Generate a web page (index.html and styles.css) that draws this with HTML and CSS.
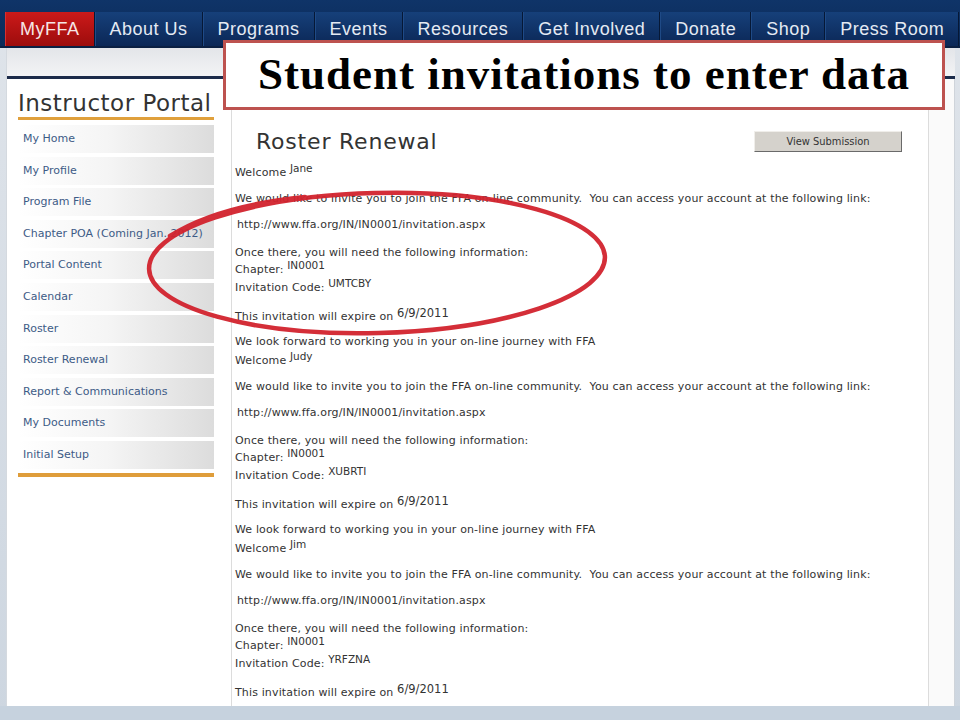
FILE: index.html
```html
<!DOCTYPE html>
<html lang="en">
<head>
    <meta charset="UTF-8">
    <title>Roster Renewal - Instructor Portal</title>
    <link rel="stylesheet" href="styles.css">
</head>
<body>
    <div class="topnav">
        <ul class="tabs">
            <li class="tab active">MyFFA</li>
            <li class="tab">About Us</li>
            <li class="tab">Programs</li>
            <li class="tab">Events</li>
            <li class="tab">Resources</li>
            <li class="tab">Get Involved</li>
            <li class="tab">Donate</li>
            <li class="tab">Shop</li>
            <li class="tab">Press Room</li>
        </ul>
    </div>

    <div class="page">
        <div class="page-top"></div>
        <div class="page-main">
            <aside class="sidebar">
                <h2 class="portal-title">Instructor Portal</h2>
                <ul class="side-menu">
                    <li><a href="#">My Home</a></li>
                    <li><a href="#">My Profile</a></li>
                    <li><a href="#">Program File</a></li>
                    <li><a href="#">Chapter POA (Coming Jan. 2012)</a></li>
                    <li><a href="#">Portal Content</a></li>
                    <li><a href="#">Calendar</a></li>
                    <li><a href="#">Roster</a></li>
                    <li><a href="#">Roster Renewal</a></li>
                    <li><a href="#">Report &amp; Communications</a></li>
                    <li><a href="#">My Documents</a></li>
                    <li><a href="#">Initial Setup</a></li>
                </ul>
                <div class="side-foot"></div>
            </aside>

            <section class="content">
                <div class="content-head">
                    <h1>Roster Renewal</h1>
                    <button class="view-button">View Submission</button>
                </div>

                <div class="invite">
                    <div class="line welcome">Welcome <span class="val">Jane</span></div>
                    <div class="line invite-text">We would like to invite you to join the FFA on-line community.&nbsp; You can access your account at the following link:</div>
                    <div class="line link">http://www.ffa.org/IN/IN0001/invitation.aspx</div>
                    <div class="line once">Once there, you will need the following information:</div>
                    <div class="line chapter">Chapter: <span class="val">IN0001</span></div>
                    <div class="line code">Invitation Code: <span class="val">UMTCBY</span></div>
                    <div class="line expire">This invitation will expire on <span class="val date">6/9/2011</span></div>
                    <div class="line forward">We look forward to working you in your on-line journey with FFA</div>
                </div>

                <div class="invite">
                    <div class="line welcome">Welcome <span class="val">Judy</span></div>
                    <div class="line invite-text">We would like to invite you to join the FFA on-line community.&nbsp; You can access your account at the following link:</div>
                    <div class="line link">http://www.ffa.org/IN/IN0001/invitation.aspx</div>
                    <div class="line once">Once there, you will need the following information:</div>
                    <div class="line chapter">Chapter: <span class="val">IN0001</span></div>
                    <div class="line code">Invitation Code: <span class="val">XUBRTI</span></div>
                    <div class="line expire">This invitation will expire on <span class="val date">6/9/2011</span></div>
                    <div class="line forward">We look forward to working you in your on-line journey with FFA</div>
                </div>

                <div class="invite">
                    <div class="line welcome">Welcome <span class="val">Jim</span></div>
                    <div class="line invite-text">We would like to invite you to join the FFA on-line community.&nbsp; You can access your account at the following link:</div>
                    <div class="line link">http://www.ffa.org/IN/IN0001/invitation.aspx</div>
                    <div class="line once">Once there, you will need the following information:</div>
                    <div class="line chapter">Chapter: <span class="val">IN0001</span></div>
                    <div class="line code">Invitation Code: <span class="val">YRFZNA</span></div>
                    <div class="line expire">This invitation will expire on <span class="val date">6/9/2011</span></div>
                </div>
            </section>

            <div class="page-edge"></div>
        </div>
    </div>

    <div class="statusbar"></div>

    <div class="slide-title">Student invitations to enter data</div>

    <svg class="annotation" width="960" height="720" viewBox="0 0 960 720">
        <ellipse cx="377" cy="263" rx="228" ry="70" transform="rotate(-1.5 377 263)" />
        <path d="M170 236 C 205 214, 255 202, 305 197" />
    </svg>
</body>
</html>
```

FILE: styles.css
```css
* {
    box-sizing: border-box;
}

body {
    margin: 0;
    padding: 0;
    width: 960px;
    height: 720px;
    overflow: hidden;
    position: relative;
    font-family: 'DejaVu Sans', Verdana, sans-serif;
    background: linear-gradient(to bottom, #dfe4ea, #cdd6e0);
}

/* top navigation */
.topnav {
    height: 48px;
    padding-top: 12px;
    background: linear-gradient(to bottom, #0f3468, #0b2a58);
    border-bottom: 2px solid #0a1f42;
}

.tabs {
    display: flex;
    margin: 0 0 0 5px;
    padding: 0;
    list-style: none;
}

.tab {
    height: 34px;
    line-height: 34px;
    padding: 0 14px;
    font-family: 'Liberation Sans', Arial, sans-serif;
    font-size: 18px;
    letter-spacing: 0.5px;
    color: #e4eaf3;
    background: linear-gradient(to bottom, #16407a, #0b2756);
    border-left: 1px solid #1f4a86;
    border-right: 1px solid #061836;
}

.tab.active {
    background: linear-gradient(to bottom, #cc1a1a, #9c0c0c);
    border-left-color: #d83030;
    color: #f6e6e6;
}

/* page body */
.page {
    margin-left: 6px;
    width: 949px;
    background: #fff;
    border-left: 1px solid #d4d9df;
}

.page-top {
    height: 31px;
    background: linear-gradient(to bottom, #e3e5e9, #f3f3f5);
    border-bottom: 3px solid #1c2b4a;
}

.page-main {
    display: flex;
    height: 627px;
    overflow: hidden;
}

.sidebar {
    width: 225px;
    padding: 10px 17px 0 11px;
    border-right: 1px solid #dcdcdc;
    flex-shrink: 0;
}

.portal-title {
    margin: 0;
    height: 31px;
    line-height: 28px;
    font-size: 23px;
    font-weight: normal;
    letter-spacing: 0.5px;
    color: #333;
    border-bottom: 3px solid #e0a03c;
}

.side-menu {
    list-style: none;
    margin: 5px 0 0;
    padding: 0;
}

.side-menu li {
    height: 28px;
    margin-bottom: 3.6px;
    background: linear-gradient(to right, #ffffff 0%, #f5f5f5 45%, #dcdcdc 100%);
}

.side-menu a {
    display: block;
    padding-left: 5px;
    line-height: 28px;
    font-size: 11px;
    color: #3d5b86;
    text-decoration: none;
}

.side-foot {
    margin-top: 3px;
    height: 4px;
    background: #df9d3a;
}

.content {
    width: 697px;
    flex-shrink: 0;
    padding: 47px 26px 0 3px;
    border-right: 1px solid #dcdcdc;
    font-size: 11px;
    letter-spacing: 0.14px;
    color: #333;
}

.content-head {
    display: flex;
    align-items: center;
    justify-content: space-between;
    height: 30px;
}

.content-head h1 {
    margin: 0 0 0 21px;
    font-size: 22px;
    font-weight: normal;
    letter-spacing: 0.8px;
    color: #333;
}

.view-button {
    width: 148px;
    height: 21px;
    padding: 0;
    font-family: 'DejaVu Sans Condensed', 'DejaVu Sans', sans-serif;
    font-size: 11px;
    color: #333;
    background: #d5d2cc;
    border: 1px solid;
    border-color: #f0eeea #6a6a6a #6a6a6a #f0eeea;
}

.invite {
    margin-top: 2px;
}

.content-head + .invite {
    margin-top: 8px;
}

.line {
    height: 17px;
    line-height: 17px;
    white-space: nowrap;
}

.invite-text,
.link {
    margin-top: 9px;
}

.link {
    padding-left: 2px;
}

.once {
    margin-top: 11px;
}

.code {
    margin-top: 1px;
}

.expire {
    margin-top: 12px;
}

.forward {
    margin-top: 8px;
}

.val {
    position: relative;
    top: -4px;
    font-size: 10.5px;
    letter-spacing: 0;
    line-height: 1;
}

.val.date {
    top: -3px;
    font-size: 11.5px;
}

.page-edge {
    flex: 1;
    background: #fafafa;
    border-right: 1px solid #cfd4da;
}

.statusbar {
    height: 14px;
    background: #c6d2de;
}

/* slide overlay */
.slide-title {
    position: absolute;
    left: 223px;
    top: 40px;
    width: 722px;
    height: 70px;
    background: #fff;
    border: 3px solid #bd524f;
    text-align: center;
    line-height: 62px;
    font-family: 'Liberation Serif', 'DejaVu Serif', serif;
    font-weight: bold;
    font-size: 45px;
    letter-spacing: 1px;
    color: #000;
}

.annotation {
    position: absolute;
    top: 0;
    left: 0;
    pointer-events: none;
    fill: none;
    stroke: #d2232e;
    stroke-width: 4.5;
    stroke-linecap: round;
    opacity: 0.95;
}
```
